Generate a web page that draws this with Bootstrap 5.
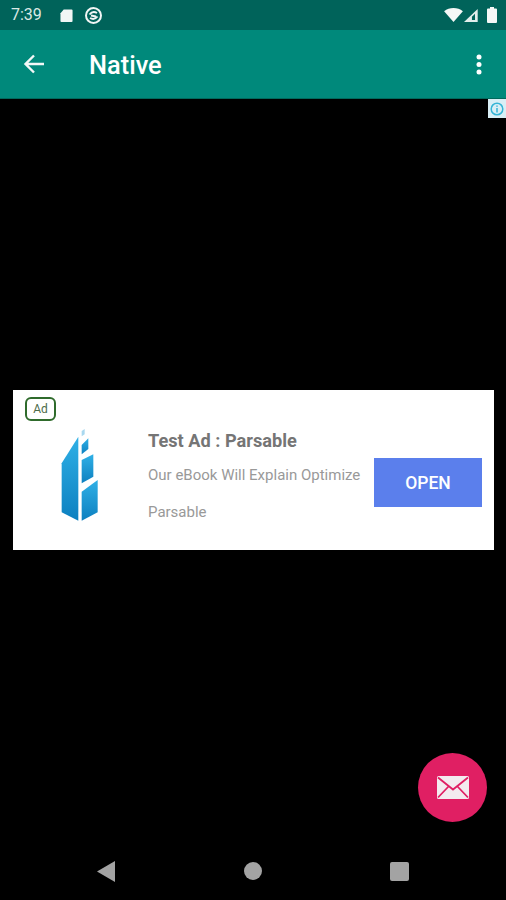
<!DOCTYPE html>
<html>

<head>
  <meta charset="utf-8">
  <meta name="viewport" content="width=device-width">
  <title>Native</title>
  <link href="https://cdn.jsdelivr.net/npm/bootstrap@5.3.3/dist/css/bootstrap.min.css" rel="stylesheet" type="text/css" />
  <style>
    body { background: #000; font-family: Roboto, "Liberation Sans", sans-serif; overflow: hidden; }
    .phone { width: 506px; height: 900px; }
    .status-bar { height: 30px; background: #00635a; color: #dbe9e6; padding: 0 9px 0 11px; font-size: 16px; }
    .status-time { width: 33px; margin-right: 16px; }
    .status-sd { margin-right: 11px; }
    .status-signal { margin: 0 8px 0 1px; }
    .tool-bar { height: 69px; background: #00897b; color: #fff; padding: 0 24px 0 23px; border-bottom: 1px solid #00695c; }
    .tool-title { font-size: 25.4px; font-weight: 500; margin-left: 45px; padding-top: 3px; line-height: 1; }
    .content-area { min-height: 0; padding: 291px 12px 0 13px; }
    .ad-choice { width: 18px; height: 19px; background: #d9eef5; }
    .ad-card { height: 160px; background: #fff; padding-right: 12px; }
    .ad-label { top: 7px; left: 12px; width: 31px; height: 24px; border: 2px solid #2f6b2c; border-radius: 6px; color: #4d6b4a; font-size: 12px; }
    .ad-logo { width: 135px; padding: 35px 0 0 37px; }
    .ad-text { width: 225px; padding-top: 41px; }
    .ad-title { color: #757575; font-size: 18.2px; font-weight: 700; margin-bottom: 6px; line-height: 20px; }
    .ad-desc { color: #999; font-size: 15px; line-height: 37px; white-space: nowrap; }
    .ad-open { width: 108px; height: 49px; background: #5b7fec; color: #fff; font-size: 17.5px; font-weight: 500; border: 0; border-radius: 0; margin-top: 68px; padding: 2px 0 0; }
    .ad-open:hover { background: #5b7fec; color: #fff; }
    .fab-btn { right: 19px; bottom: 78px; width: 69px; height: 69px; background: #e01f63; }
    .nav-area { height: 58px; padding: 0 97px; }
  </style>
</head>

<body>
  <div class="phone position-relative d-flex flex-column">

    <div class="status-bar flex-shrink-0 d-flex align-items-center">
      <span class="status-time">7:39</span>
      <svg class="status-sd" width="13" height="15" viewBox="0 0 14 15"><path d="M4 1h8.500a1 1 0 0 1 1 1v11.500a1 1 0 0 1-1 1H1.500a1 1 0 0 1-1-1V5z" fill="#f1f6f5"/></svg>
      <svg width="19" height="19" viewBox="0 0 19 19" fill="none" stroke="#f1f6f5"><circle cx="9.500" cy="9.500" r="7.500" stroke-width="2"/><path d="M5.500 8.500c2-2.500 5-3 7.500-1.500M13.500 10.500c-2 2.500-5 3-7.500 1.500M7 9.500l5 1" stroke-width="2"/></svg>
      <svg class="ms-auto" width="19" height="15" viewBox="0 0 20 16"><path d="M0 3.500C5.500-1 14.500-1 20 3.500L10 15z" fill="#f4f8f7"/></svg>
      <svg class="status-signal" width="15" height="15" viewBox="0 0 17 16"><path d="M0 15.500L15.500 .5v15z" fill="#e3eeec"/><path d="M9 9.500l3.500-3.500v7H9z" fill="#00635a"/></svg>
      <svg width="10" height="16" viewBox="0 0 10 16"><path d="M3 0h4v1.500h2a1 1 0 0 1 1 1V15a1 1 0 0 1-1 1H1a1 1 0 0 1-1-1V2.500a1 1 0 0 1 1-1h2z" fill="#f4f8f7"/></svg>
    </div>

    <div class="tool-bar flex-shrink-0 d-flex align-items-center">
      <svg width="21" height="20" viewBox="0 0 21 20" fill="none" stroke="#f2f8f7" stroke-width="2.400"><path d="M21 10H3M11 1.500L2.500 10l8.500 8.500"/></svg>
      <span class="tool-title flex-grow-1">Native</span>
      <svg width="6" height="21" viewBox="0 0 6 21" fill="#fff"><circle cx="3" cy="3" r="2.500"/><circle cx="3" cy="10.500" r="2.500"/><circle cx="3" cy="18" r="2.500"/></svg>
    </div>

    <div class="content-area flex-grow-1 position-relative">
      <div class="ad-choice position-absolute top-0 end-0 d-flex align-items-center justify-content-center">
        <svg width="14" height="14" viewBox="0 0 14 14" fill="none"><circle cx="7" cy="7" r="5.800" stroke="#35b4d6" stroke-width="1.500"/><path d="M7 6v4.500M7 3.500v1.300" stroke="#35b4d6" stroke-width="1.500"/></svg>
      </div>

      <div class="ad-card d-flex position-relative">
        <div class="ad-label position-absolute d-flex align-items-center justify-content-center">Ad</div>
        <div class="ad-logo">
          <svg width="60" height="100" viewBox="0 0 180 300" class="d-block">
            <defs><linearGradient id="blue" x1="0" y1="0" x2="0" y2="1"><stop offset="0" stop-color="#2fb0e6"/><stop offset="1" stop-color="#0d80c0"/></linearGradient></defs>
            <path d="M35 115L85 35V287L35 262z" fill="url(#blue)"/>
            <path d="M95 18L104 12V28L95 34z" fill="#a9d8ef"/>
            <path d="M95 60L115 40V72L95 88z" fill="url(#blue)"/>
            <path d="M95 105L130 88V155L95 175z" fill="url(#blue)"/>
            <path d="M95 200L143 165V262L95 287z" fill="url(#blue)"/>
          </svg>
        </div>
        <div class="ad-text">
          <div class="ad-title">Test Ad : Parsable</div>
          <div class="ad-desc">Our eBook Will Explain Optimize<br>Parsable</div>
        </div>
        <div class="ms-auto">
          <button type="button" class="btn ad-open">OPEN</button>
        </div>
      </div>
    </div>

    <div class="nav-area flex-shrink-0 d-flex align-items-center justify-content-between">
      <svg width="18" height="21" viewBox="0 0 18 21"><path d="M18 0v21L0 10.500z" fill="#a3a3a3"/></svg>
      <svg width="18" height="18" viewBox="0 0 18 18"><circle cx="9" cy="9" r="9" fill="#a3a3a3"/></svg>
      <svg width="19" height="19" viewBox="0 0 19 19"><rect width="19" height="19" rx="2" fill="#a3a3a3"/></svg>
    </div>

    <button type="button" class="fab-btn btn position-absolute rounded-circle p-0 border-0 d-flex align-items-center justify-content-center">
      <svg width="32" height="23" viewBox="0 0 32 23"><rect width="32" height="23" rx="1.500" fill="#f3ebef"/><path d="M1 1.500l15 12 15-12M1 21.500l10.500-11M31 21.500l-10.500-11" fill="none" stroke="#e01f63" stroke-width="1.800"/></svg>
    </button>

  </div>
  <script src="https://cdn.jsdelivr.net/npm/bootstrap@5.3.3/dist/js/bootstrap.bundle.min.js"></script>
</body>

</html>
